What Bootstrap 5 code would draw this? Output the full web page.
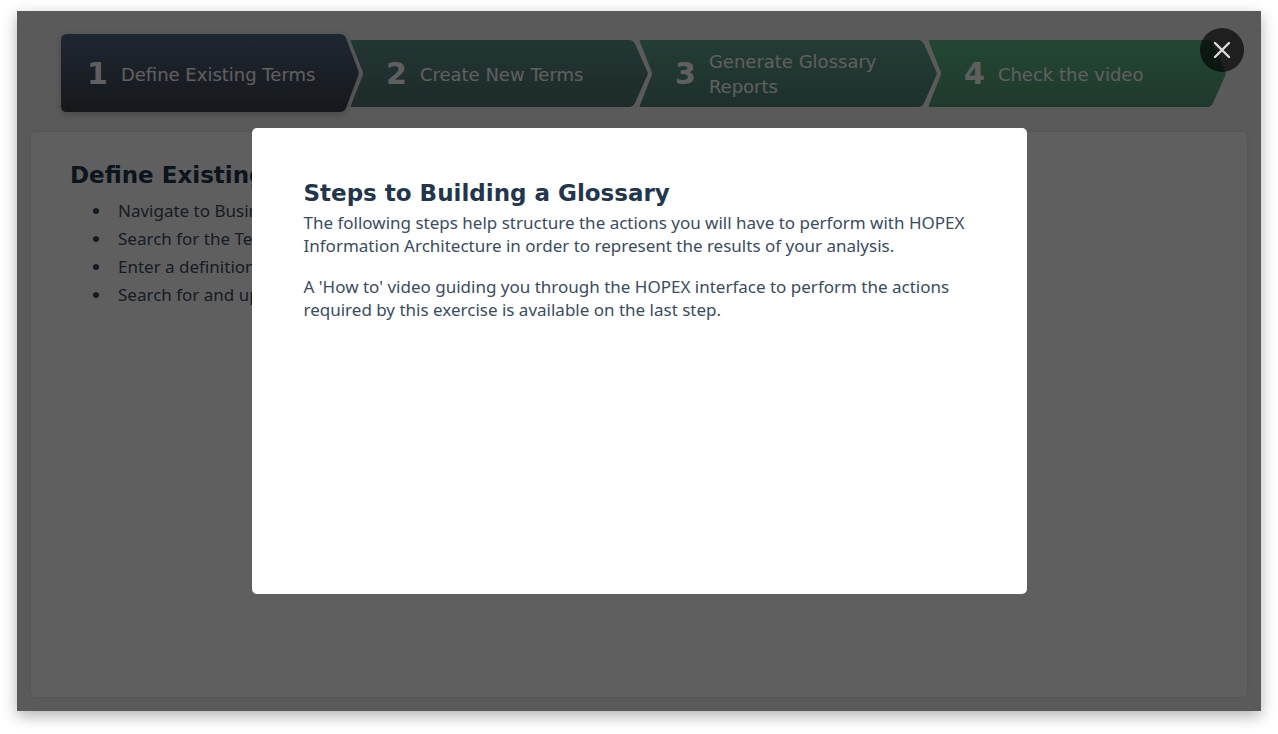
<!DOCTYPE html>
<html lang="en">
<head>
<meta charset="utf-8">
<meta name="viewport" content="width=device-width, initial-scale=1">
<title>Steps to Building a Glossary</title>
<link href="https://cdn.jsdelivr.net/npm/bootstrap@5.3.0/dist/css/bootstrap.min.css" rel="stylesheet">
<style>
  body { font-family: "Noto Sans", sans-serif; font-size: 17px; color: #3a4c61; background: #fff; }
  .page { padding: 11px 17px 23px; }
  .stage { background: #f0f0f0; padding: 23px 14px 14px; box-shadow: 0 5px 14px rgba(0,0,0,.3); }
  .steps { padding: 0 21px 0 30px; margin-bottom: 20px; height: 78px; }
  .step { height: 67px; padding: 2px 36px 0 36px; gap: 13px; color: #fff; font: 18px/25px "DejaVu Sans", sans-serif; flex: 1 1 25%; }
  .step + .step { margin-left: -9px; }
  .step.current { height: 78px; padding-left: 26px; }
  .step svg { position: absolute; inset: 0; width: 100%; height: 100%; z-index: 0; overflow: visible; }
  .step.current svg { filter: drop-shadow(0 2px 3px rgba(0,0,0,.2)); }
  .step span { position: relative; }
  .num { font-size: 30px; font-weight: bold; line-height: 36px; }
  .panel { background: #fff; border-radius: 5px; padding: 27px 39px; box-shadow: 0 0 3px rgba(0,0,0,.1); }
  h1, h2 { font: bold 23px/32px "DejaVu Sans", sans-serif; color: #22364d; margin: 0; }
  .panel ul { margin: 6px 0 0; padding-left: 42px; line-height: 28px; }
  .panel li { padding-left: 6px; }
  .shade { background: rgba(0,0,0,.627); }
  .dialog-box { width: 62.3%; height: 66.7%; background: #fff; border-radius: 5px; padding: 49px 52px; line-height: 23px; }
  .dialog-box p { margin: 0 0 18px; }
  .dialog-box h2 { margin-bottom: 2px; }
  .close-btn { top: 17px; right: 17px; width: 44px; height: 44px; background: rgba(0,0,0,.65); }
</style>
<script src="https://cdn.jsdelivr.net/npm/bootstrap@5.3.0/dist/js/bootstrap.bundle.min.js"></script>
</head>
<body>
<svg width="0" height="0" class="position-absolute" aria-hidden="true">
  <defs>
    <linearGradient id="g1" x2="0" y2="1"><stop stop-color="#536a87"/><stop offset="1" stop-color="#3b4048"/></linearGradient>
    <linearGradient id="g2" x2="0" y2="1"><stop stop-color="#5b9189"/><stop offset="1" stop-color="#507371"/></linearGradient>
    <linearGradient id="g3" x2="0" y2="1"><stop stop-color="#5fa38e"/><stop offset="1" stop-color="#528177"/></linearGradient>
    <linearGradient id="g4" x2="0" y2="1"><stop stop-color="#5fbe8b"/><stop offset="1" stop-color="#569976"/></linearGradient>
  </defs>
</svg>
<div class="page vh-100">
  <div class="stage position-relative h-100 d-flex flex-column">
    <nav class="steps d-flex align-items-center" aria-label="Steps">
      <a href="#s1" class="step current position-relative d-flex align-items-center text-decoration-none" aria-current="step">
        <svg viewBox="0 0 298 78" preserveAspectRatio="none"><path fill="url(#g1)" d="M6 0H279Q283 0 285 4L297 36Q298.500 39 297 42L285 74Q283 78 279 78H6Q0 78 0 72V6Q0 0 6 0Z"/></svg>
        <span class="num">1</span><span>Define Existing Terms</span></a>
      <a href="#s2" class="step position-relative d-flex align-items-center text-decoration-none">
        <svg viewBox="0 0 298 67" preserveAspectRatio="none"><path fill="url(#g2)" d="M2 0H279Q283 0 285 4L297 31Q298.500 33.500 297 36L285 63Q283 67 279 67H2Q0 67 1 65L12 37Q14 33.500 12 30L1 2Q0 0 2 0Z"/></svg>
        <span class="num">2</span><span>Create New Terms</span></a>
      <a href="#s3" class="step position-relative d-flex align-items-center text-decoration-none">
        <svg viewBox="0 0 298 67" preserveAspectRatio="none"><path fill="url(#g3)" d="M2 0H279Q283 0 285 4L297 31Q298.500 33.500 297 36L285 63Q283 67 279 67H2Q0 67 1 65L12 37Q14 33.500 12 30L1 2Q0 0 2 0Z"/></svg>
        <span class="num">3</span><span>Generate Glossary Reports</span></a>
      <a href="#s4" class="step position-relative d-flex align-items-center text-decoration-none">
        <svg viewBox="0 0 298 67" preserveAspectRatio="none"><path fill="url(#g4)" d="M2 0H279Q283 0 285 4L297 31Q298.500 33.500 297 36L285 63Q283 67 279 67H2Q0 67 1 65L12 37Q14 33.500 12 30L1 2Q0 0 2 0Z"/></svg>
        <span class="num">4</span><span>Check the video</span></a>
    </nav>
    <main class="panel flex-grow-1">
      <h1>Define Existing</h1>
      <ul>
        <li>Navigate to Business</li>
        <li>Search for the Terms</li>
        <li>Enter a definition</li>
        <li>Search for and update</li>
      </ul>
    </main>
    <div class="shade position-absolute top-0 start-0 w-100 h-100 d-flex align-items-center justify-content-center">
      <section class="dialog-box" role="dialog" aria-labelledby="dlg">
        <h2 id="dlg">Steps to Building a Glossary</h2>
        <p>The following steps help structure the actions you will have to perform with HOPEX Information Architecture in order to represent the results of your analysis.</p>
        <p>A 'How to' video guiding you through the HOPEX interface to perform the actions required by this exercise is available on the last step.</p>
      </section>
      <button type="button" class="close-btn position-absolute border-0 rounded-circle p-0 d-flex align-items-center justify-content-center" aria-label="Close">
        <svg width="18" height="18" viewBox="0 0 18 18" fill="none" stroke="#ddd" stroke-width="2.400" stroke-linecap="round"><path d="M2 2L16 16M16 2L2 16"/></svg>
      </button>
    </div>
  </div>
</div>
</body>
</html>
